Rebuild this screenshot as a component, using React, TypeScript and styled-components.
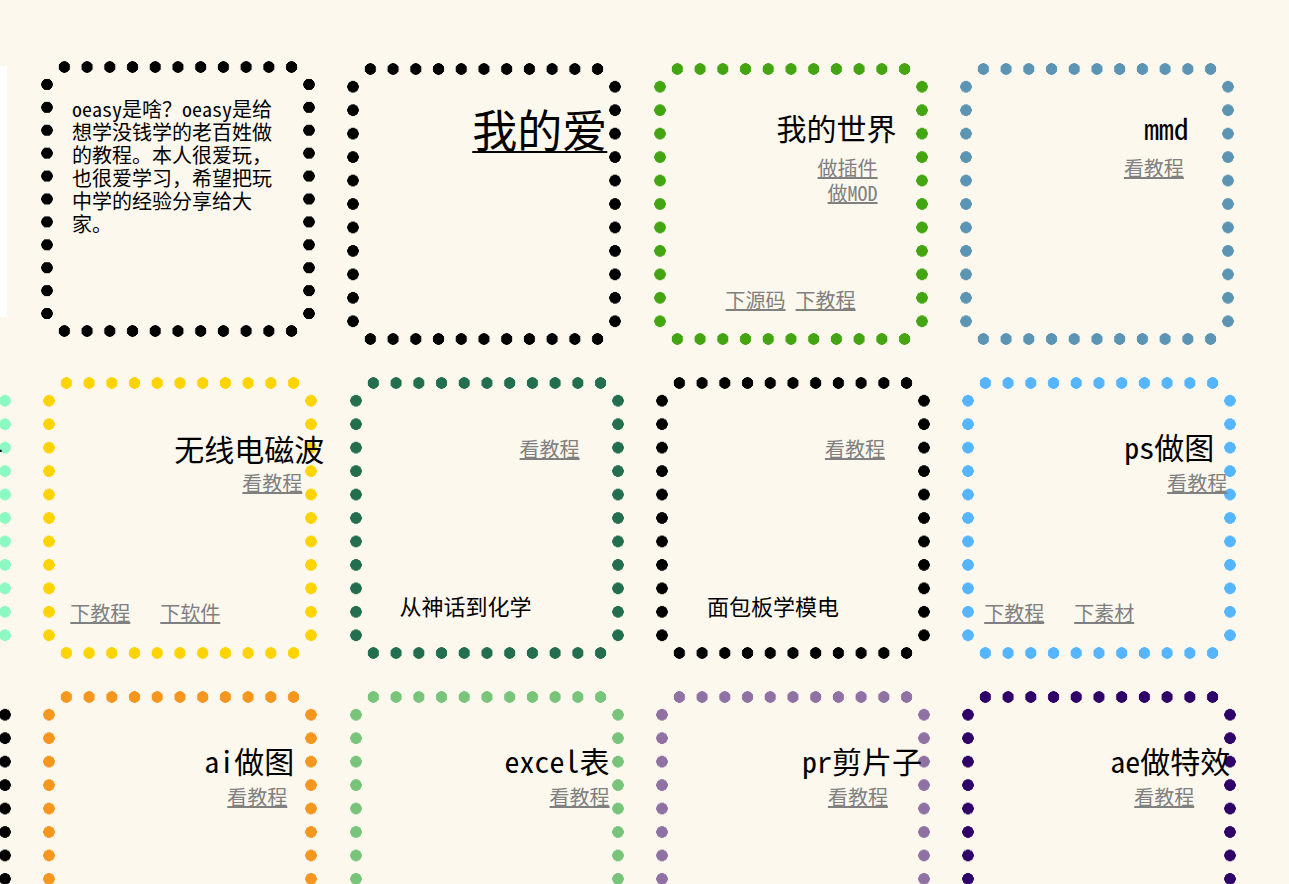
import React from "react";
import styled, { createGlobalStyle } from "styled-components";

const FONT = '"Noto Sans Mono CJK SC", "Noto Sans CJK SC", "DejaVu Sans Mono", monospace';

const GlobalStyle = createGlobalStyle`
  html, body {
    margin: 0;
    padding: 0;
    background: #fcf8ee;
    overflow: hidden;
  }
  body {
    font-family: ${FONT};
    color: #000;
  }
`;

const Page = styled.main`
  display: flex;
  flex-direction: column;
  gap: 32px;
  padding-top: 63px;
  width: 1289px;
  height: 884px;
  overflow: hidden;
`;

const Row = styled.section<{ $shift: number }>`
  display: flex;
  align-items: flex-start;
  gap: 32.3px;
  margin-left: ${(p) => p.$shift}px;
  flex-shrink: 0;
`;

const WhiteStrip = styled.div`
  flex: 0 0 auto;
  width: 274px;
  height: 251px;
  margin-top: 3px;
  margin-right: 1.7px;
  background: #ffffff;
`;

const dot = (c: string) =>
  `radial-gradient(circle 6px at 50% 50%, ${c} 5.5px, transparent 6px)`;

/* A tile framed by a dotted border: 11 round dots per side, empty corners. */
const Tile = styled.div<{ $color: string; $h?: number; $lift?: number }>`
  position: relative;
  isolation: isolate;
  box-sizing: border-box;
  flex: 0 0 auto;
  width: 274px;
  height: ${(p) => p.$h ?? 282}px;
  margin-top: ${(p) => -(p.$lift ?? 0)}px;
  padding: 12px;
  display: flex;
  flex-direction: column;

  &::before,
  &::after {
    content: "";
    position: absolute;
    z-index: -1;
    pointer-events: none;
  }
  &::before {
    left: 12px;
    right: 12px;
    top: 0;
    bottom: 0;
    background-image: ${(p) => dot(p.$color)}, ${(p) => dot(p.$color)};
    background-size: calc(100% / 11) 12px;
    background-position: left top, left bottom;
    background-repeat: repeat-x;
  }
  &::after {
    left: 0;
    right: 0;
    top: 12px;
    bottom: 12px;
    background-image: ${(p) => dot(p.$color)}, ${(p) => dot(p.$color)};
    background-size: 12px calc(100% / 11);
    background-position: left top, right top;
    background-repeat: repeat-y;
  }
`;

const Intro = styled.p`
  margin: 23.5px 0 0 19px;
  width: 201px;
  font-size: 20px;
  line-height: 23px;
`;

const Title = styled.div<{ $size?: number; $top: number; $right: number; $under?: boolean }>`
  font-size: ${(p) => p.$size ?? 30}px;
  line-height: 1;
  margin-top: ${(p) => p.$top}px;
  margin-right: ${(p) => p.$right}px;
  text-align: right;
  white-space: nowrap;
  text-decoration: ${(p) => (p.$under ? "underline" : "none")};
  text-decoration-thickness: ${(p) => (p.$under ? "2px" : "auto")};
  text-underline-offset: 3px;
  color: #000;
`;

const LinkStack = styled.div<{ $top: number; $right: number }>`
  display: flex;
  flex-direction: column;
  align-items: flex-end;
  gap: 5px;
  margin-top: ${(p) => p.$top}px;
  margin-right: ${(p) => p.$right}px;
`;

const Link = styled.a`
  font-size: 20px;
  line-height: 20px;
  color: #808080;
  text-decoration: underline;
  white-space: nowrap;
  cursor: pointer;
`;

const BottomRow = styled.div<{ $left: number; $bottom: number; $gap?: number }>`
  margin-top: auto;
  display: flex;
  gap: ${(p) => p.$gap ?? 10}px;
  padding-left: ${(p) => p.$left}px;
  margin-bottom: ${(p) => p.$bottom}px;
`;

const Caption = styled.span`
  font-size: 22px;
  line-height: 22px;
  color: #000;
  white-space: nowrap;
`;

export default function App() {
  return (
    <>
      <GlobalStyle />
      <Page>
        <Row $shift={-267}>
          <WhiteStrip />
          <Tile $color="#000000" $h={276} $lift={2}>
            <Intro>
              oeasy是啥？oeasy是给想学没钱学的老百姓做的教程。本人很爱玩，也很爱学习，希望把玩中学的经验分享给大家。
            </Intro>
          </Tile>
          <Tile $color="#000000">
            <Title $size={45} $top={30.5} $right={2} $under>
              我的爱
            </Title>
          </Tile>
          <Tile $color="#44a512">
            <Title $top={37} $right={19}>我的世界</Title>
            <LinkStack $top={16} $right={38}>
              <Link>做插件</Link>
              <Link>做MOD</Link>
            </LinkStack>
            <BottomRow $left={60} $bottom={23}>
              <Link>下源码</Link>
              <Link>下教程</Link>
            </BottomRow>
          </Tile>
          <Tile $color="#5b95b3">
            <Title $top={37} $right={33}>mmd</Title>
            <LinkStack $top={16} $right={38}>
              <Link>看教程</Link>
            </LinkStack>
          </Tile>
        </Row>

        <Row $shift={-263}>
          <Tile $color="#8cf9c2">
            <Title $top={44} $right={-4}>电子</Title>
          </Tile>
          <Tile $color="#fdd300">
            <Title $top={44} $right={-19}>无线电磁波</Title>
            <LinkStack $top={10} $right={3}>
              <Link>看教程</Link>
            </LinkStack>
            <BottomRow $left={15} $bottom={24} $gap={30}>
              <Link>下教程</Link>
              <Link>下软件</Link>
            </BottomRow>
          </Tile>
          <Tile $color="#236e4e">
            <LinkStack $top={50} $right={32}>
              <Link>看教程</Link>
            </LinkStack>
            <BottomRow $left={38} $bottom={31}>
              <Caption>从神话到化学</Caption>
            </BottomRow>
          </Tile>
          <Tile $color="#000000">
            <LinkStack $top={50} $right={33}>
              <Link>看教程</Link>
            </LinkStack>
            <BottomRow $left={39} $bottom={31}>
              <Caption>面包板学模电</Caption>
            </BottomRow>
          </Tile>
          <Tile $color="#56b5ff">
            <Title $top={42} $right={10}>ps做图</Title>
            <LinkStack $top={12} $right={-3}>
              <Link>看教程</Link>
            </LinkStack>
            <BottomRow $left={10} $bottom={24} $gap={30}>
              <Link>下教程</Link>
              <Link>下素材</Link>
            </BottomRow>
          </Tile>
        </Row>

        <Row $shift={-263}>
          <Tile $color="#000000" />
          <Tile $color="#f5961f">
            <Title $top={42} $right={11}>ai做图</Title>
            <LinkStack $top={12} $right={18}>
              <Link>看教程</Link>
            </LinkStack>
          </Tile>
          <Tile $color="#77c47a">
            <Title $top={42} $right={2}>excel表</Title>
            <LinkStack $top={12} $right={2}>
              <Link>看教程</Link>
            </LinkStack>
          </Tile>
          <Tile $color="#8f72a3">
            <Title $top={42} $right={-4}>pr剪片子</Title>
            <LinkStack $top={12} $right={30}>
              <Link>看教程</Link>
            </LinkStack>
          </Tile>
          <Tile $color="#2e0068">
            <Title $top={42} $right={-6}>ae做特效</Title>
            <LinkStack $top={12} $right={30}>
              <Link>看教程</Link>
            </LinkStack>
          </Tile>
        </Row>
      </Page>
    </>
  );
}
